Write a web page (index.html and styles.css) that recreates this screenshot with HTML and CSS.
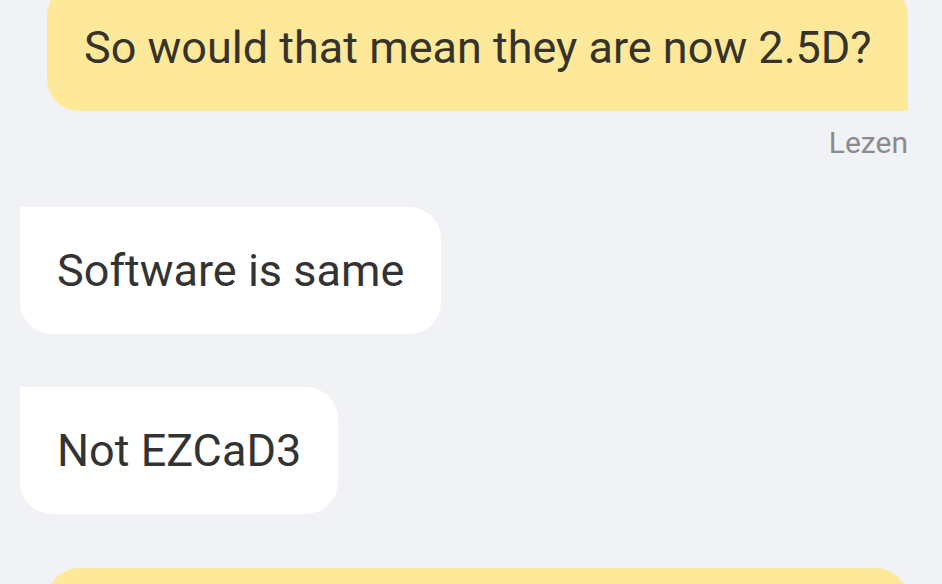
FILE: index.html
```html
<!DOCTYPE html>
<html lang="en">
<head>
    <meta charset="UTF-8">
    <meta name="viewport" content="width=device-width, initial-scale=1.0">
    <title>Chat</title>
    <link rel="stylesheet" href="styles.css">
</head>
<body>
    <div class="chat">
        <!-- мои сообщения -->
        <div class="msg msg-out">So would that mean they are now 2.5D?</div>
        <div class="status">Lezen</div>

        <!-- входящие -->
        <div class="msg msg-in first">Software is same</div>
        <div class="msg msg-in">Not EZCaD3</div>

        <div class="msg msg-out next">&nbsp;</div>
    </div>
</body>
</html>
```

FILE: styles.css
```css
html, body {
    margin: 0;
    padding: 0;
    height: 100%;
    overflow: hidden;
}

body {
    font-family: Roboto, "Liberation Sans", sans-serif;
    background-color: #f1f2f6;
    color: #333333;
}

.chat {
    display: flex;
    flex-direction: column;
    align-items: flex-start;
    margin-top: -16px;
    padding: 0 34px 0 20px;
}

.msg {
    font-size: 45px;
    line-height: 53px;
    padding: 37px 37px;
    border-radius: 32px;
    box-sizing: border-box;
    white-space: nowrap;
}

.msg-out {
    align-self: flex-end;
    width: 861px;
    background-color: #fee99b;
    color: #36332a;
    border-bottom-right-radius: 0;
}

.msg-in {
    background-color: #ffffff;
    border-top-left-radius: 0;
    margin-top: 53px;
}

.msg-in.first {
    margin-top: 47px;
}

.msg-out.next {
    margin-top: 54px;
    border-radius: 32px;
}

.status {
    align-self: flex-end;
    margin-top: 15px;
    font-size: 30px;
    line-height: 34px;
    color: #8b8b8d;
}
```
